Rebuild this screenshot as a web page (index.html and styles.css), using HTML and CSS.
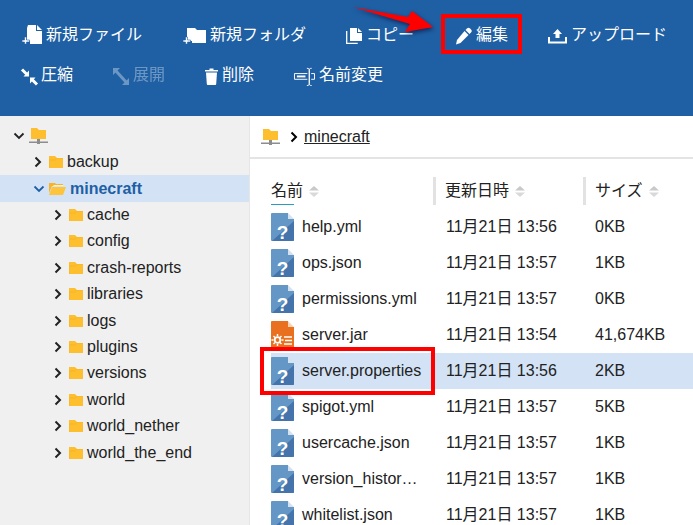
FILE: index.html
```html
<!DOCTYPE html>
<html lang="ja">
<head>
<meta charset="utf-8">
<title>minecraft</title>
<link rel="stylesheet" href="styles.css">
</head>
<body>
<svg class="defs" aria-hidden="true">
  <defs>
    <symbol id="folder" viewBox="0 0 14 12"><path fill="#fdbf2d" d="M0 0h6l2 2h6v10H0z"/><path fill="#f6ab1e" d="M0 12V3h6l1-1 7 0v1H8L6 5H1v7z" opacity=".35"/></symbol>
    <symbol id="folder-open" viewBox="0 0 17 13"><path fill="#f9b425" d="M0 1h6l1 1h7v2H3L0 11z"/><path fill="#fff3c8" d="M5 3h9v1H4z"/><path fill="#fdc43c" d="M3 5h14l-3 8H0z"/></symbol>
    <symbol id="network" viewBox="0 0 19 16"><path fill="#fdbf2d" d="M2 0h6l2 2h7v9H2z"/><path fill="#8d8d8d" d="M0 13.500h19V15H0z"/><path fill="#8d8d8d" d="M8 11h3v5H8z"/></symbol>
    <symbol id="file" viewBox="0 0 23 28">
      <path fill="#6597c6" d="M1 0h16v6h6v21a1 1 0 0 1-1 1H1a1 1 0 0 1-1-1V1a1 1 0 0 1 1-1z"/>
      <path fill="#4474ab" d="M23 8v19a1 1 0 0 1-1 1H1z"/>
      <path fill="#d5e1ee" d="M17 0l6 6h-6z"/>
      <text x="11.500" y="26" class="q">?</text>
    </symbol>
    <symbol id="jar" viewBox="0 0 23 28">
      <path fill="#e8701f" d="M1 0h16v6h6v21a1 1 0 0 1-1 1H1a1 1 0 0 1-1-1V1a1 1 0 0 1 1-1z"/>
      <path fill="#f8d3b4" d="M17 0l6 6h-6z"/>
      <circle cx="6.500" cy="19" r="2.800" fill="none" stroke="#fff" stroke-width="1.800"/>
      <path stroke="#fff" stroke-width="1.500" d="M6.500 13v2M6.500 23v2M.5 19h2M10.500 19h2M2.500 15l1.500 1.500M10.500 15L9 16.500M2.500 23L4 21.500M10.500 23L9 21.500"/>
      <path stroke="#fff" stroke-width="1.300" d="M13 16h8M14 19.500h7M13 23h8"/>
    </symbol>
    <symbol id="chev" viewBox="0 0 8 12"><path fill="none" stroke="currentColor" stroke-width="2" d="M1.500 1.500 6 6l-4.500 4.500"/></symbol>
    <symbol id="chev-down" viewBox="0 0 12 8"><path fill="none" stroke="currentColor" stroke-width="1.800" d="M1.500 1.500 6 6l4.500-4.500"/></symbol>
    <symbol id="sort" viewBox="0 0 10 11"><path fill="#c9c9c9" d="M5 0l5 4.500H0z"/><path fill="#d9d9d9" d="M0 6.500h10L5 11z"/></symbol>
  </defs>
</svg>

<header class="toolbar">
  <div class="tool-row">
    <span class="tool"><svg class="ic w20" viewBox="0 0 20 20"><path fill="#fff" d="M6 1h8v6h6v13H8v-3H5V4z"/><path fill="#fff" d="M15 1l5 5h-5z"/><path fill="#fff" d="M2.500 13h2v3h3v2h-3v2h-2v-2H0v-2h2.500z" stroke="#1f5fa4" stroke-width=".6"/></svg>新規ファイル</span>
    <span class="tool"><svg class="ic w24" viewBox="0 0 24 20"><path fill="#fff" d="M5 4h8l2 2h9v13H10v-2H5z"/><path fill="#fff" d="M3.500 13h2v3h3v2h-3v2h-2v-2H1v-2h2.500z" stroke="#1f5fa4" stroke-width=".6"/></svg>新規フォルダ</span>
    <span class="tool"><svg class="ic w16" viewBox="0 0 16 20"><path fill="none" stroke="#fff" stroke-width="1.300" d="M.7 7v12.300h11"/><path fill="#fff" d="M4 4h7v5h5v8H4z"/><path fill="#fff" d="M12 4l4 4h-4z"/></svg>コピー</span>
    <span class="tool"><svg class="ic w18" viewBox="0 0 18 20"><path fill="#fff" d="M13 4.500c1-1 2-1 3 0l1 1c1 1 1 2 0 3L15.500 10l-4-4z"/><path fill="#fff" d="M10.500 7l4 4-8 8L2 20.500 3 16z"/></svg>編集</span>
    <span class="tool"><svg class="ic w19" viewBox="0 0 19 20"><path fill="#fff" d="M9.500 5l4.500 5h-2.500v4h-4v-4H5z"/><path fill="#fff" d="M0 13h2v4.500h15V13h2v6.500H0z"/></svg>アップロード</span>
  </div>
  <div class="tool-row">
    <span class="tool"><svg class="ic w15" viewBox="0 0 15 20"><path stroke="#fff" stroke-width="3" d="M0 4.500l4.500 4.500M10 14.500l5 5"/><path fill="#fff" d="M7 11.500V5.500L1.500 11.500zM8 12.500v6l5.500-6z"/></svg>圧縮</span>
    <span class="tool dim"><svg class="ic w16" viewBox="0 0 16 20"><path fill="#fff" d="M0 3h7L0 10zM16 20H9l7-7z"/><path stroke="#fff" stroke-width="3" d="M3 6l10 11"/></svg>展開</span>
    <span class="tool"><svg class="ic w13" viewBox="0 0 13 20"><path fill="#fff" d="M0 5h4.500V3.500h4V5H13v1.500H0zM1 7.500h11l-.8 11.500a1 1 0 0 1-1 1H2.800a1 1 0 0 1-1-1z"/></svg>削除</span>
    <span class="tool"><svg class="ic w21" viewBox="0 0 22 20"><path fill="none" stroke="#fff" d="M14 8.500H.5v6H14M18 8.500h3.500v6H18"/><path fill="#fff" d="M3 10.500h9v2H3z"/><path fill="none" stroke="#fff" d="M13.500 3c2 0 2.500.5 2.500 2v14c0 1.500-.5 2-2.500 2M18.500 3c-2 0-2.500.5-2.500 2v14c0 1.500.5 2 2.500 2"/></svg>名前変更</span>
  </div>
</header>

<main class="main">
  <nav class="tree">
    <div class="node root"><svg class="chev-d"><use href="#chev-down"/></svg><svg class="net"><use href="#network"/></svg></div>
    <div class="node l1"><svg class="chev"><use href="#chev"/></svg><svg class="fold"><use href="#folder"/></svg><span>backup</span></div>
    <div class="node l1 active"><svg class="chev-d"><use href="#chev-down"/></svg><svg class="fold-open"><use href="#folder-open"/></svg><span>minecraft</span></div>
    <div class="node l2"><svg class="chev"><use href="#chev"/></svg><svg class="fold"><use href="#folder"/></svg><span>cache</span></div>
    <div class="node l2"><svg class="chev"><use href="#chev"/></svg><svg class="fold"><use href="#folder"/></svg><span>config</span></div>
    <div class="node l2"><svg class="chev"><use href="#chev"/></svg><svg class="fold"><use href="#folder"/></svg><span>crash-reports</span></div>
    <div class="node l2"><svg class="chev"><use href="#chev"/></svg><svg class="fold"><use href="#folder"/></svg><span>libraries</span></div>
    <div class="node l2"><svg class="chev"><use href="#chev"/></svg><svg class="fold"><use href="#folder"/></svg><span>logs</span></div>
    <div class="node l2"><svg class="chev"><use href="#chev"/></svg><svg class="fold"><use href="#folder"/></svg><span>plugins</span></div>
    <div class="node l2"><svg class="chev"><use href="#chev"/></svg><svg class="fold"><use href="#folder"/></svg><span>versions</span></div>
    <div class="node l2"><svg class="chev"><use href="#chev"/></svg><svg class="fold"><use href="#folder"/></svg><span>world</span></div>
    <div class="node l2"><svg class="chev"><use href="#chev"/></svg><svg class="fold"><use href="#folder"/></svg><span>world_nether</span></div>
    <div class="node l2"><svg class="chev"><use href="#chev"/></svg><svg class="fold"><use href="#folder"/></svg><span>world_the_end</span></div>
  </nav>

  <section class="content">
    <div class="crumb"><svg class="net"><use href="#network"/></svg><svg class="crumb-chev"><use href="#chev"/></svg><a class="crumb-link">minecraft</a></div>
    <div class="list">
      <div class="head">
        <div class="hcell name"><span class="htext first">名前</span><svg class="sort"><use href="#sort"/></svg></div>
        <div class="hcell date"><span class="htext">更新日時</span><svg class="sort"><use href="#sort"/></svg></div>
        <div class="hcell size"><span class="htext">サイズ</span><svg class="sort"><use href="#sort"/></svg></div>
      </div>
      <div class="row"><div class="cell name"><svg class="fi"><use href="#file"/></svg><span class="fname">help.yml</span></div><div class="cell date">11月21日 13:56</div><div class="cell size">0KB</div></div>
      <div class="row"><div class="cell name"><svg class="fi"><use href="#file"/></svg><span class="fname">ops.json</span></div><div class="cell date">11月21日 13:57</div><div class="cell size">1KB</div></div>
      <div class="row"><div class="cell name"><svg class="fi"><use href="#file"/></svg><span class="fname">permissions.yml</span></div><div class="cell date">11月21日 13:57</div><div class="cell size">0KB</div></div>
      <div class="row"><div class="cell name"><svg class="fi"><use href="#jar"/></svg><span class="fname">server.jar</span></div><div class="cell date">11月21日 13:54</div><div class="cell size">41,674KB</div></div>
      <div class="row selected"><div class="cell name"><svg class="fi"><use href="#file"/></svg><span class="fname">server.properties</span></div><div class="cell date">11月21日 13:56</div><div class="cell size">2KB</div></div>
      <div class="row"><div class="cell name"><svg class="fi"><use href="#file"/></svg><span class="fname">spigot.yml</span></div><div class="cell date">11月21日 13:57</div><div class="cell size">5KB</div></div>
      <div class="row"><div class="cell name"><svg class="fi"><use href="#file"/></svg><span class="fname">usercache.json</span></div><div class="cell date">11月21日 13:57</div><div class="cell size">1KB</div></div>
      <div class="row"><div class="cell name"><svg class="fi"><use href="#file"/></svg><span class="fname">version_histor…</span></div><div class="cell date">11月21日 13:57</div><div class="cell size">1KB</div></div>
      <div class="row"><div class="cell name"><svg class="fi"><use href="#file"/></svg><span class="fname">whitelist.json</span></div><div class="cell date">11月21日 13:57</div><div class="cell size">1KB</div></div>
    </div>
  </section>
</main>

<div class="mark mark-edit"></div>
<div class="mark mark-file"></div>
<svg class="arrow" viewBox="0 0 100 40"><polygon points="3,2 58,12 62,6 83,22 55,27 60,19" fill="#f00"/></svg>
</body>
</html>
```
FILE: styles.css
```css
* { box-sizing: border-box; }
html, body { margin: 0; height: 100%; overflow: hidden; }
body {
  font-family: "Liberation Sans", "Noto Sans CJK JP", sans-serif;
  font-size: 16px;
  line-height: 20px;
  color: #222;
  background: #fff;
  position: relative;
}
.defs { position: absolute; width: 0; height: 0; }
.q { font: bold 19px "Liberation Sans", sans-serif; fill: #fff; text-anchor: middle; }

.toolbar {
  height: 116px;
  padding: 15px 0 0 22px;
  background: #1f5fa4;
  color: #fff;
}
.tool-row { display: flex; gap: 40px; height: 40px; align-items: flex-start; }
.tool { display: flex; align-items: center; height: 40px; gap: 4px; white-space: nowrap; }
.tool.dim { opacity: .35; }
.ic { flex: none; height: 20px; overflow: visible; }
.tool-row:first-child .ic { margin-top: -2px; }
.w13 { width: 13px; }
.w15 { width: 15px; }
.w16 { width: 16px; }
.w18 { width: 18px; }
.w19 { width: 19px; }
.w20 { width: 20px; }
.w21 { width: 21px; }
.w24 { width: 24px; }

.main { display: flex; height: 409px; }
.tree { width: 250px; flex: none; padding-top: 6.7px; background: #f0f0f0; border-right: 1px solid #e6e6e6; }
.node { display: flex; align-items: center; height: 26.4px; }
.node span { margin-left: 4px; }
.root { padding-left: 13px; }
.root .net { margin-left: -2px; }
.l1 { padding-left: 34px; }
.l2 { padding-left: 54px; }
.chev { width: 8px; height: 12px; color: #222; margin-right: 7px; flex: none; }
.chev-d { width: 12px; height: 8px; color: #222; margin-right: 6px; flex: none; }
.l1 .chev-d { color: #1f5fa4; margin-left: -1px; margin-right: 4px; }
.fold { width: 14px; height: 12px; flex: none; }
.fold-open { width: 17px; height: 13px; flex: none; }
.net { width: 19px; height: 16px; flex: none; }
.active { background: #d3e3f5; color: #1f5fa4; font-weight: bold; }

.content { flex: 1; min-width: 0; }
.crumb { display: flex; align-items: center; height: 43px; padding-left: 11px; border-bottom: 2px solid #e4e4e4; }
.crumb-chev { width: 8px; height: 12px; margin-left: 10px; color: #000; flex: none; }
.crumb-link { margin-left: 6px; color: #222; text-decoration: underline; }

.list { padding: 18px 0 0 21px; }
.head { display: flex; height: 32px; }
.hcell { display: flex; align-items: flex-start; gap: 6px; height: 28px; }
.hcell.date, .hcell.size { border-left: 3px solid #e2e2e2; padding-left: 9px; }
.htext { height: 28px; line-height: 28px; }
.htext.first { position: relative; }
.htext.first::after { content: ""; position: absolute; left: 0; bottom: 0; width: 23px; height: 1px; background: #2b9bc0; }
.sort { width: 10px; height: 11px; margin-top: 9px; flex: none; }
.hcell.name { width: 162px; }
.hcell.date { width: 150px; }
.row { display: flex; align-items: center; height: 36px; }
.cell { white-space: nowrap; }
.cell.name { display: flex; align-items: center; gap: 8px; width: 175px; }
.cell.date { width: 149px; }
.selected { background: #d3e3f5; }
.fi { width: 23px; height: 28px; flex: none; }

.mark { position: absolute; border: 4px solid #f00; }
.mark-edit { left: 441px; top: 14px; width: 81px; height: 40px; }
.mark-file { left: 260px; top: 347px; width: 175px; height: 48px; }
.arrow {
  position: absolute;
  left: 350px;
  top: 5px;
  width: 100px;
  height: 40px;
  filter: drop-shadow(1px 2px 2px rgba(0, 0, 40, .6));
}
```
